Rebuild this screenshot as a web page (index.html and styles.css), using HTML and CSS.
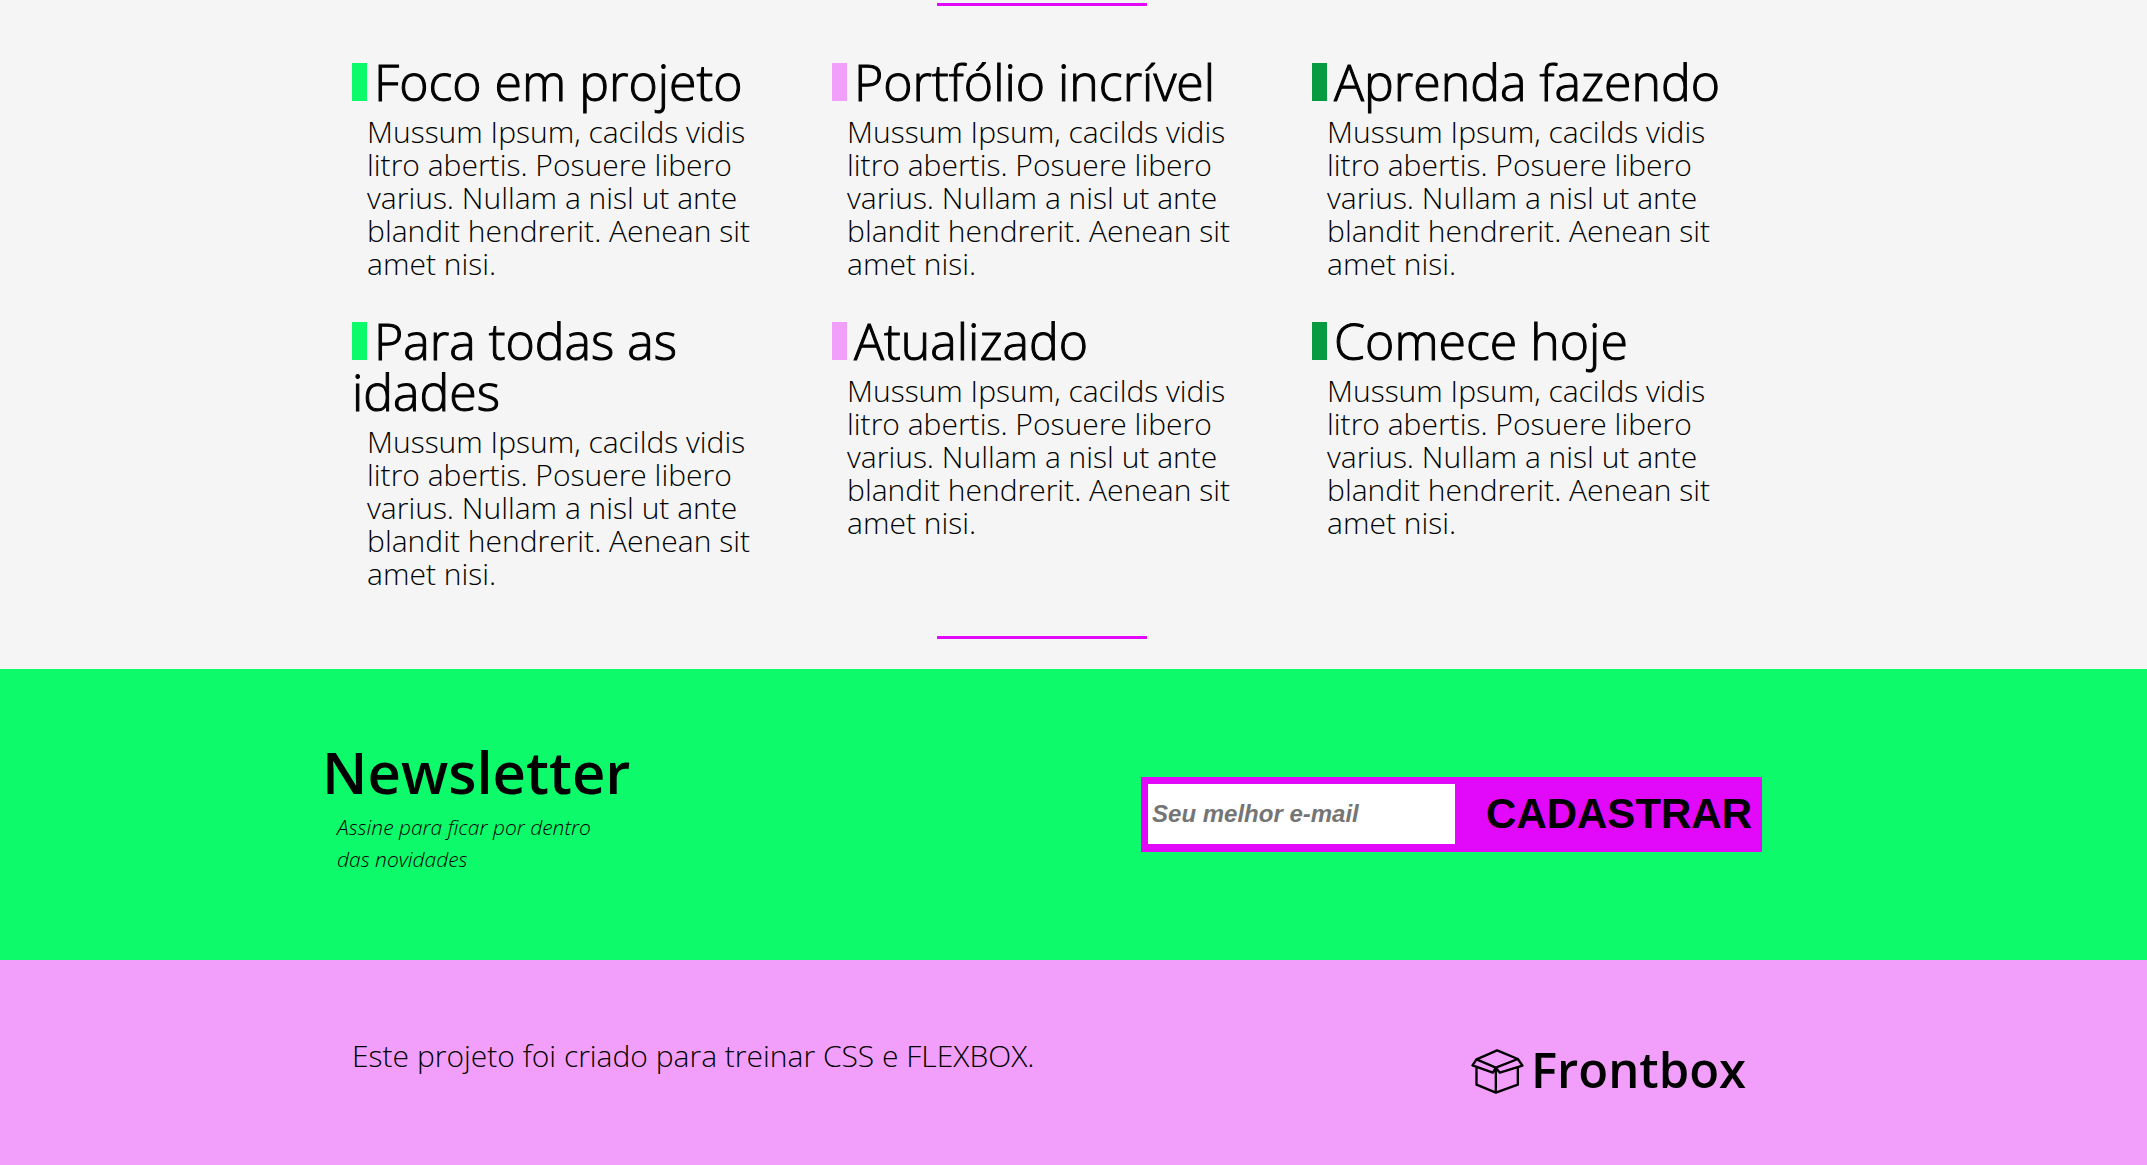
FILE: index.html
```
<!DOCTYPE html>
<html lang="pt-BR">
<head>
  <meta charset="utf-8">
  <meta name="viewport" content="width=device-width, initial-scale=1">
  <title>Frontbox</title>
  <link rel="stylesheet" href="styles.css">
</head>
<body>
  <main class="features">
    <hr class="rule">
    <div class="grid">
      <section class="card card-green">
        <h2 class="card-title">Foco em projeto</h2>
        <p class="card-text">Mussum Ipsum, cacilds vidis litro abertis. Posuere libero varius. Nullam a nisl ut ante blandit hendrerit. Aenean sit amet nisi.</p>
      </section>
      <section class="card card-pink">
        <h2 class="card-title">Portfólio incrível</h2>
        <p class="card-text">Mussum Ipsum, cacilds vidis litro abertis. Posuere libero varius. Nullam a nisl ut ante blandit hendrerit. Aenean sit amet nisi.</p>
      </section>
      <section class="card card-dark">
        <h2 class="card-title">Aprenda fazendo</h2>
        <p class="card-text">Mussum Ipsum, cacilds vidis litro abertis. Posuere libero varius. Nullam a nisl ut ante blandit hendrerit. Aenean sit amet nisi.</p>
      </section>
      <section class="card card-green">
        <h2 class="card-title">Para todas as idades</h2>
        <p class="card-text">Mussum Ipsum, cacilds vidis litro abertis. Posuere libero varius. Nullam a nisl ut ante blandit hendrerit. Aenean sit amet nisi.</p>
      </section>
      <section class="card card-pink">
        <h2 class="card-title">Atualizado</h2>
        <p class="card-text">Mussum Ipsum, cacilds vidis litro abertis. Posuere libero varius. Nullam a nisl ut ante blandit hendrerit. Aenean sit amet nisi.</p>
      </section>
      <section class="card card-dark">
        <h2 class="card-title">Comece hoje</h2>
        <p class="card-text">Mussum Ipsum, cacilds vidis litro abertis. Posuere libero varius. Nullam a nisl ut ante blandit hendrerit. Aenean sit amet nisi.</p>
      </section>
    </div>
    <hr class="rule">
  </main>

  <section class="newsletter">
    <div class="newsletter-inner">
      <div>
        <h2 class="newsletter-title">Newsletter</h2>
        <p class="newsletter-text">Assine para ficar por dentro das novidades</p>
      </div>
      <form class="signup">
        <input class="signup-input" type="email" aria-label="Seu melhor e-mail" placeholder="Seu melhor e-mail">
        <button class="signup-button" type="submit">CADASTRAR</button>
      </form>
    </div>
  </section>

  <footer class="footer">
    <div class="footer-inner">
      <p class="footer-text">Este projeto foi criado para treinar CSS e FLEXBOX.</p>
      <div class="logo">
        <svg class="logo-icon" viewBox="32 27 158 135" aria-hidden="true">
          <path d="M48 58 110 31 172 57 106 83ZM48 58 36 76 97 98 106 83 118 98 186 77 172 57M48 82V134L106 158 172 134V84M106 83V158"/>
        </svg>
        <span class="logo-name">Frontbox</span>
      </div>
    </div>
  </footer>
</body>
</html>
```
FILE: styles.css
```
* {
  box-sizing: border-box;
  margin: 0;
  padding: 0;
}

body {
  background: #f5f5f5;
  color: #000;
  font-family: "Open Sans", "Noto Sans", sans-serif;
  font-weight: 300;
}

.features,
.newsletter-inner,
.footer-inner {
  max-width: 1440px;
  margin-left: 15%;
}

.features {
  padding: 3px 0 30px;
}

.rule {
  width: 210px;
  height: 3px;
  margin: 0 auto;
  border: 0;
  background: #e209fa;
}

.grid {
  display: grid;
  grid-template-columns: repeat(3, 1fr);
  row-gap: 36px;
  padding: 51px 0 46px;
}

.card {
  padding: 0 30px;
}

.card-title {
  margin-bottom: 7px;
  font-size: 50px;
  font-weight: 300;
  line-height: 51px;
  -webkit-text-stroke: 1px #000;
}

.card-title::before {
  content: "";
  display: inline-block;
  width: 15px;
  height: 38px;
  margin-right: 7px;
  background: #0dfb6b;
}

.card-pink .card-title::before {
  background: #f29ffb;
}

.card-dark .card-title::before {
  background: #079b41;
}

.card-text {
  padding: 0 15px;
  font-size: 30px;
  line-height: 33px;
}

.newsletter {
  padding: 71px 0 85px;
  background: #0dfb6b;
}

.newsletter-inner {
  display: flex;
  justify-content: space-between;
  align-items: flex-start;
}

.newsletter-title {
  margin-bottom: 7px;
  font-size: 58px;
  font-weight: 600;
  line-height: 64px;
}

.newsletter-text {
  max-width: 300px;
  padding: 0 15px;
  font-size: 21px;
  font-style: italic;
  line-height: 32px;
}

.signup {
  display: flex;
  margin-top: 37px;
  padding: 7px 0 8px 7px;
  background: #e209fa;
}

.signup-input,
.signup-button {
  height: 60px;
  border: 0;
  font-family: "Liberation Sans", Arial, sans-serif;
  font-weight: 700;
}

.signup-input {
  width: 307px;
  padding: 0 4px;
  background: #fff;
  font-size: 24px;
  font-style: italic;
}

.signup-input::placeholder {
  color: #757575;
}

.signup-button {
  padding: 0 10px 0 31px;
  background: #e209fa;
  color: #000;
  font-size: 42px;
  cursor: pointer;
}

.footer {
  padding: 79px 0 72px;
  background: #f29ffb;
}

.footer-inner {
  display: flex;
  justify-content: space-between;
  align-items: flex-start;
  padding: 0 16px 0 30px;
}

.footer-text {
  font-size: 30px;
  line-height: 33px;
}

.logo {
  display: flex;
  align-items: flex-end;
  gap: 7px;
  padding-top: 6px;
}

.logo-icon {
  width: 53px;
  height: 45px;
  fill: none;
  stroke: #000;
  stroke-width: 7;
  stroke-linejoin: round;
}

.logo-name {
  font-size: 49px;
  font-weight: 600;
  line-height: 49px;
}
```
